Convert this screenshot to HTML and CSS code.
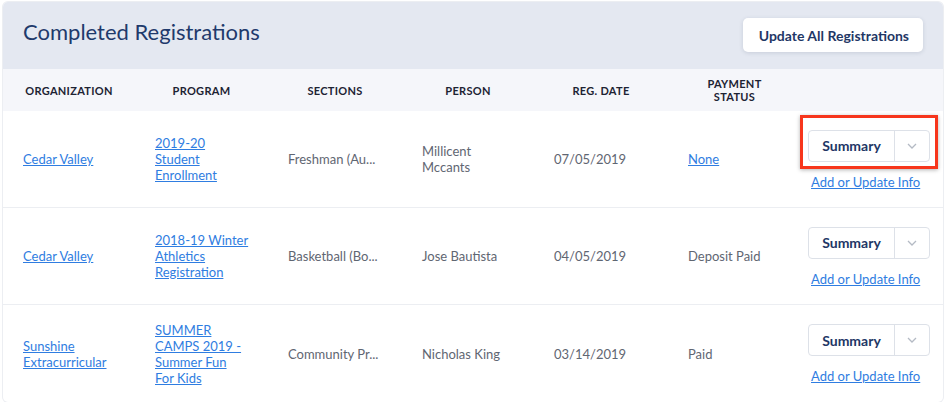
FILE: index.html
```html
<!DOCTYPE html>
<html lang="en">
<head>
  <meta charset="UTF-8">
  <meta name="viewport" content="width=device-width, initial-scale=1.0">
  <title>Completed Registrations</title>
  <link rel="stylesheet" href="styles.css">
</head>
<body>
  <div class="card">
    <div class="card-header">
      <h2>Completed Registrations</h2>
      <button class="btn-update">Update All Registrations</button>
    </div>

    <table class="reg-table">
      <thead>
        <tr>
          <th class="col-org">Organization</th>
          <th class="col-program">Program</th>
          <th class="col-sections">Sections</th>
          <th class="col-person">Person</th>
          <th class="col-date">Reg. Date</th>
          <th class="col-payment">Payment<br>Status</th>
          <th class="col-action"></th>
        </tr>
      </thead>
      <tbody>
        <tr>
          <td><a href="#">Cedar Valley</a></td>
          <td class="program-cell"><a href="#">2019-20 Student Enrollment</a></td>
          <td title="Freshman (August 2019)">Freshman (Au...</td>
          <td>Millicent Mccants</td>
          <td>07/05/2019</td>
          <td><a href="#">None</a></td>
          <td class="action-cell">
            <div class="actions highlighted">
              <div class="split-btn">
                <button class="split-main">Summary</button>
                <button class="split-toggle"><svg width="10" height="6" viewBox="0 0 10 6"><path d="M1 1l4 4 4-4" fill="none" stroke="#b4bac4" stroke-width="1.3"/></svg></button>
              </div>
              <a href="#" class="info-link">Add or Update Info</a>
            </div>
          </td>
        </tr>
        <tr>
          <td><a href="#">Cedar Valley</a></td>
          <td class="program-cell"><a href="#">2018-19 Winter Athletics Registration</a></td>
          <td title="Basketball (Boys Varsity)">Basketball (Bo...</td>
          <td>Jose Bautista</td>
          <td>04/05/2019</td>
          <td>Deposit Paid</td>
          <td class="action-cell">
            <div class="actions">
              <div class="split-btn">
                <button class="split-main">Summary</button>
                <button class="split-toggle"><svg width="10" height="6" viewBox="0 0 10 6"><path d="M1 1l4 4 4-4" fill="none" stroke="#b4bac4" stroke-width="1.3"/></svg></button>
              </div>
              <a href="#" class="info-link">Add or Update Info</a>
            </div>
          </td>
        </tr>
        <tr>
          <td><a href="#">Sunshine Extracurricular</a></td>
          <td class="program-cell"><a href="#">SUMMER CAMPS 2019 - Summer Fun For&nbsp;Kids</a></td>
          <td title="Community Programs">Community Pr...</td>
          <td>Nicholas King</td>
          <td>03/14/2019</td>
          <td>Paid</td>
          <td class="action-cell">
            <div class="actions">
              <div class="split-btn">
                <button class="split-main">Summary</button>
                <button class="split-toggle"><svg width="10" height="6" viewBox="0 0 10 6"><path d="M1 1l4 4 4-4" fill="none" stroke="#b4bac4" stroke-width="1.3"/></svg></button>
              </div>
              <a href="#" class="info-link">Add or Update Info</a>
            </div>
          </td>
        </tr>
      </tbody>
    </table>
  </div>
</body>
</html>
```

FILE: styles.css
```css
body {
  font-family: 'Lato', 'Liberation Sans', sans-serif;
  -webkit-font-smoothing: antialiased;
  background-color: #ffffff;
  margin: 0;
  padding: 2px 4px 0 3px;
  color: #5f6672;
}

.card {
  background-color: white;
  border-radius: 5px;
  box-shadow: 0 0 0 1px #eceef2;
  width: 940px;
  overflow: hidden;
}

.card-header {
  background-color: #e4e8f1;
  height: 67px;
  display: flex;
  align-items: center;
  justify-content: space-between;
  padding: 0 20px 0 20px;
  box-sizing: border-box;
}

h2 {
  margin: 0 0 8px 0;
  font-size: 22px;
  font-weight: 400;
  color: #1f3a6c;
}

.btn-update {
  background-color: white;
  border: none;
  border-radius: 5px;
  box-shadow: 0 1px 4px rgba(40, 55, 90, 0.15);
  height: 34px;
  padding: 0 14px 0 16px;
  font-family: inherit;
  font-size: 14px;
  font-weight: 700;
  color: #1f3766;
  margin-bottom: 1px;
}

.reg-table {
  width: 100%;
  border-collapse: collapse;
  table-layout: fixed;
}

.reg-table th {
  background-color: #f5f6fa;
  height: 42px;
  padding: 0;
  font-size: 11px;
  font-weight: 700;
  text-transform: uppercase;
  color: #1d2333;
  text-align: center;
  line-height: 13px;
  letter-spacing: 0.3px;
}

.col-org { width: 132px; }
.col-program { width: 133px; }
.col-sections { width: 134px; }
.col-person { width: 132px; }
.col-date { width: 134px; }
.col-payment { width: 133px; }

.reg-table td {
  height: 96px;
  padding: 0 20px;
  font-size: 13px;
  line-height: 16px;
  vertical-align: middle;
  border-bottom: 1px solid #eceef2;
  white-space: normal;
}

.reg-table tr:last-child td {
  border-bottom: none;
  height: 97px;
}

.reg-table td.program-cell {
  padding-right: 16px;
}

.reg-table a {
  color: #2f7de1;
  text-decoration: underline;
}

.reg-table td.action-cell {
  padding: 0 13px 0 7px;
}

.actions {
  display: flex;
  flex-direction: column;
  align-items: flex-start;
  gap: 13px;
  position: relative;
  padding-top: 1px;
}

.highlighted::after {
  content: '';
  position: absolute;
  left: -8px;
  right: -8px;
  top: -14px;
  bottom: 21px;
  border: 3px solid #f7361c;
  box-shadow: 0 1px 4px rgba(0, 0, 0, 0.3);
}

.split-btn {
  display: flex;
  width: 122px;
  height: 32px;
  border: 1px solid #dde1e8;
  border-radius: 4px;
  box-sizing: border-box;
  background: white;
}

.split-btn button {
  background: none;
  border: none;
  padding: 0;
  font-family: inherit;
}

.split-main {
  flex: 1;
  border-right: 1px solid #dde1e8 !important;
  font-size: 14px;
  font-weight: 700;
  color: #1f3766;
}

.split-toggle {
  width: 34px;
  display: flex;
  align-items: center;
  justify-content: center;
}

.reg-table .info-link {
  font-size: 13px;
  line-height: 15px;
  margin-left: 3px;
}
```
